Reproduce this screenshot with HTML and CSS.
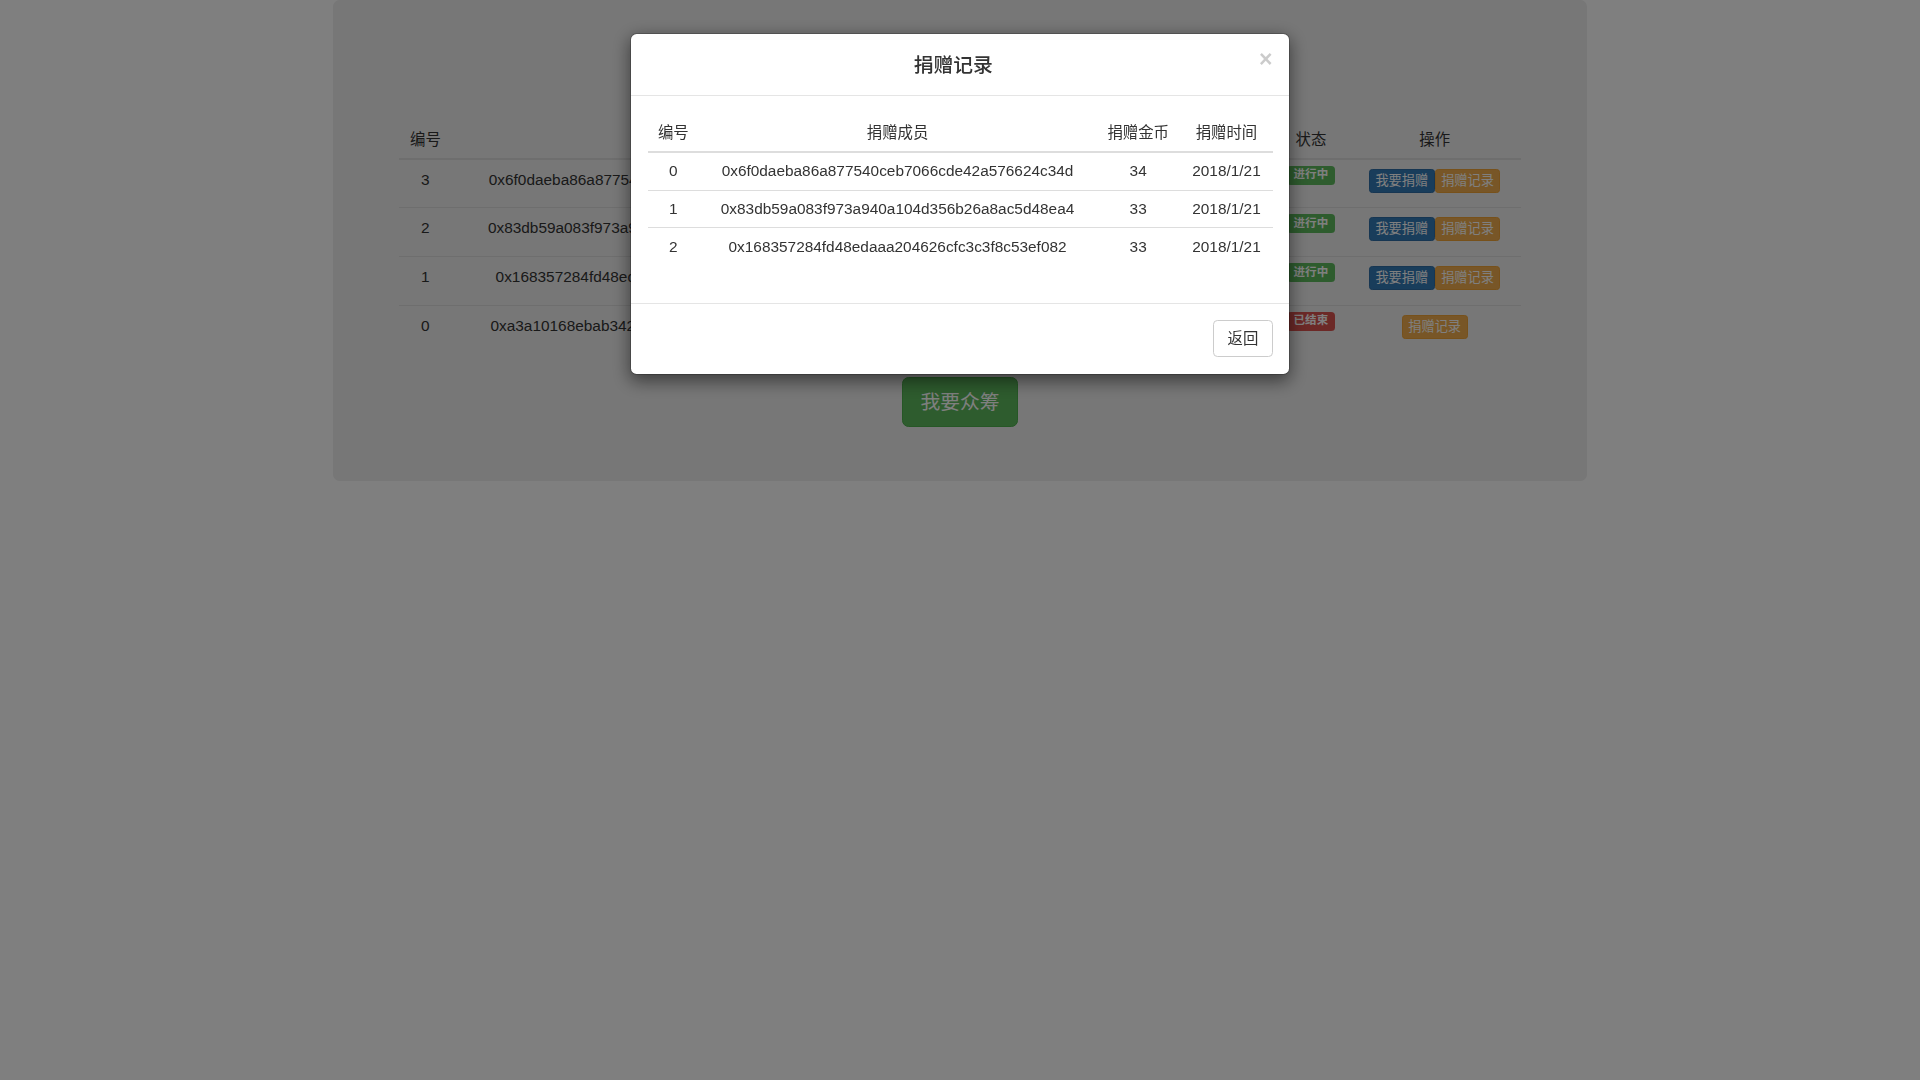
FILE: index.html
```html
<!DOCTYPE html>
<html lang="zh-CN">
<head>
<meta charset="utf-8">
<title>众筹</title>
<link rel="stylesheet" href="styles.css">
</head>
<body>
<div class="container">
  <div class="jumbotron">
    <div class="jumbo-head"></div>
    <table class="table bg-table">
      <colgroup>
        <col class="c-id"><col class="c-addr"><col class="c-mid"><col class="c-mid"><col class="c-status"><col class="c-op">
      </colgroup>
      <thead>
        <tr><th>编号</th><th>发起人</th><th>目标金额</th><th>已筹金额</th><th>状态</th><th>操作</th></tr>
      </thead>
      <tbody>
        <tr>
          <td>3</td><td>0x6f0daeba86a877540ceb7066cde42a576624c34d</td><td>100</td><td>100</td>
          <td class="status-cell"><span class="label label-success">进行中</span></td>
          <td><button class="btn btn-xs btn-primary">我要捐赠</button><button class="btn btn-xs btn-warning">捐赠记录</button></td>
        </tr>
        <tr>
          <td>2</td><td>0x83db59a083f973a940a104d356b26a8ac5d48ea4</td><td>100</td><td>0</td>
          <td class="status-cell"><span class="label label-success">进行中</span></td>
          <td><button class="btn btn-xs btn-primary">我要捐赠</button><button class="btn btn-xs btn-warning">捐赠记录</button></td>
        </tr>
        <tr>
          <td>1</td><td>0x168357284fd48edaaa204626cfc3c3f8c53ef082</td><td>100</td><td>0</td>
          <td class="status-cell"><span class="label label-success">进行中</span></td>
          <td><button class="btn btn-xs btn-primary">我要捐赠</button><button class="btn btn-xs btn-warning">捐赠记录</button></td>
        </tr>
        <tr>
          <td>0</td><td>0xa3a10168ebab342b9c1f6e05d2a7c48e31f9b6d0</td><td>100</td><td>100</td>
          <td class="status-cell"><span class="label label-danger">已结束</span></td>
          <td><button class="btn btn-xs btn-warning">捐赠记录</button></td>
        </tr>
      </tbody>
    </table>
    <div class="center">
      <button class="btn btn-lg btn-success">我要众筹</button>
    </div>
  </div>
</div>

<div class="modal-backdrop"></div>
<div class="modal">
  <div class="modal-dialog">
    <div class="modal-content">
      <div class="modal-header">
        <button class="close" type="button">×</button>
        <h4 class="modal-title">捐赠记录</h4>
      </div>
      <div class="modal-body">
        <table class="table modal-table">
          <thead>
            <tr><th>编号</th><th>捐赠成员</th><th>捐赠金币</th><th>捐赠时间</th></tr>
          </thead>
          <tbody>
            <tr><td>0</td><td>0x6f0daeba86a877540ceb7066cde42a576624c34d</td><td>34</td><td>2018/1/21</td></tr>
            <tr><td>1</td><td>0x83db59a083f973a940a104d356b26a8ac5d48ea4</td><td>33</td><td>2018/1/21</td></tr>
            <tr><td>2</td><td>0x168357284fd48edaaa204626cfc3c3f8c53ef082</td><td>33</td><td>2018/1/21</td></tr>
          </tbody>
        </table>
      </div>
      <div class="modal-footer">
        <button class="btn btn-default" type="button">返回</button>
      </div>
    </div>
  </div>
</div>
</body>
</html>
```

FILE: styles.css
```css
html {
  zoom: 1.1;
}
body {
  margin: 0;
  background: #fff;
  color: #333;
  font-family: "Liberation Sans", "Noto Sans CJK SC", sans-serif;
  font-size: 14px;
  line-height: 1.42857143;
}
* { box-sizing: border-box; }

.container {
  width: 1170px;
  margin: 0 auto;
  padding: 0 15px;
}
.jumbotron {
  background: #eee;
  border-radius: 6px;
  padding: 48px 60px 49px;
  margin-bottom: 30px;
}
.jumbo-head {
  height: 61.5px;
}

.table {
  width: 100%;
  border-collapse: collapse;
  border-spacing: 0;
  margin-bottom: 20px;
}
.table th {
  font-weight: normal;
  padding: 8px;
  line-height: 20px;
  text-align: center;
  vertical-align: bottom;
  border-bottom: 2px solid #ddd;
}
.table td {
  padding: 8px;
  line-height: 20px;
  text-align: center;
  vertical-align: top;
  border-top: 1px solid #ddd;
}

.bg-table {
  table-layout: fixed;
}
.bg-table th {
  padding-bottom: 6px;
}
.c-id { width: 48px; }
.c-addr { width: 387px; }
.c-mid { width: 180px; }
.c-status { width: 68px; }
.c-op { width: 157px; }
.bg-table tbody tr { height: 44.5px; }
.bg-table td { white-space: nowrap; overflow: hidden; }
.bg-table td.status-cell { padding-top: 5.5px; }

.label {
  display: inline-block;
  vertical-align: top;
  padding: 2.1px 6.3px 3.15px;
  font-size: 10.5px;
  font-weight: bold;
  line-height: 11.7px;
  color: #fff;
  border-radius: 3.5px;
  white-space: nowrap;
}
.label-success { background: #5cb85c; }
.label-danger { background: #d9534f; }

.btn {
  display: inline-block;
  font-family: inherit;
  font-weight: normal;
  text-align: center;
  vertical-align: middle;
  border: 1px solid transparent;
  white-space: nowrap;
  cursor: pointer;
  margin: 0;
}
.btn-xs {
  padding: 1px 5px;
  font-size: 12px;
  line-height: 1.5;
  border-radius: 3px;
}
.btn-lg {
  padding: 10px 16px;
  font-size: 18px;
  line-height: 1.3333333;
  border-radius: 6px;
}
.btn-default {
  padding: 6px 12px;
  font-size: 14px;
  line-height: 1.42857143;
  border-radius: 4px;
  color: #333;
  background: #fff;
  border-color: #ccc;
}
.btn-primary { color: #fff; background: #337ab7; border-color: #2e6da4; }
.btn-warning { color: #fff; background: #f0ad4e; border-color: #eea236; }
.btn-success { color: #fff; background: #5cb85c; border-color: #4cae4c; }

.center { text-align: center; }

.modal-backdrop {
  position: fixed;
  inset: 0;
  background: #000;
  opacity: 0.5;
  z-index: 1040;
}
.modal {
  position: fixed;
  inset: 0;
  z-index: 1050;
  overflow: hidden;
}
.modal-dialog {
  width: 600px;
  margin: 30px auto;
}
.modal-content {
  background: #fff;
  border: 1px solid rgba(0, 0, 0, 0.2);
  border-radius: 6px;
  box-shadow: 0 5px 15px rgba(0, 0, 0, 0.5);
  background-clip: padding-box;
}
.modal-header {
  padding: 15px;
  border-bottom: 1px solid #e5e5e5;
  text-align: center;
}
.modal-title {
  margin: 0;
  font-size: 18px;
  font-weight: 500;
  line-height: 1.42857143;
  color: #333;
}
.close {
  float: right;
  margin-top: -2px;
  padding: 0;
  background: transparent;
  border: 0;
  font-family: inherit;
  font-size: 21px;
  font-weight: bold;
  line-height: 1;
  color: #000;
  text-shadow: 0 1px 0 #fff;
  opacity: 0.2;
  cursor: pointer;
}
.modal-body {
  padding: 15px;
}
.modal-table {
  margin-bottom: 19px;
}
.modal-table th {
  padding: 8px 8px 6.5px;
}
.modal-table td {
  padding: 6.75px 8px;
}
.modal-footer {
  padding: 15px;
  text-align: right;
  border-top: 1px solid #e5e5e5;
}
```
